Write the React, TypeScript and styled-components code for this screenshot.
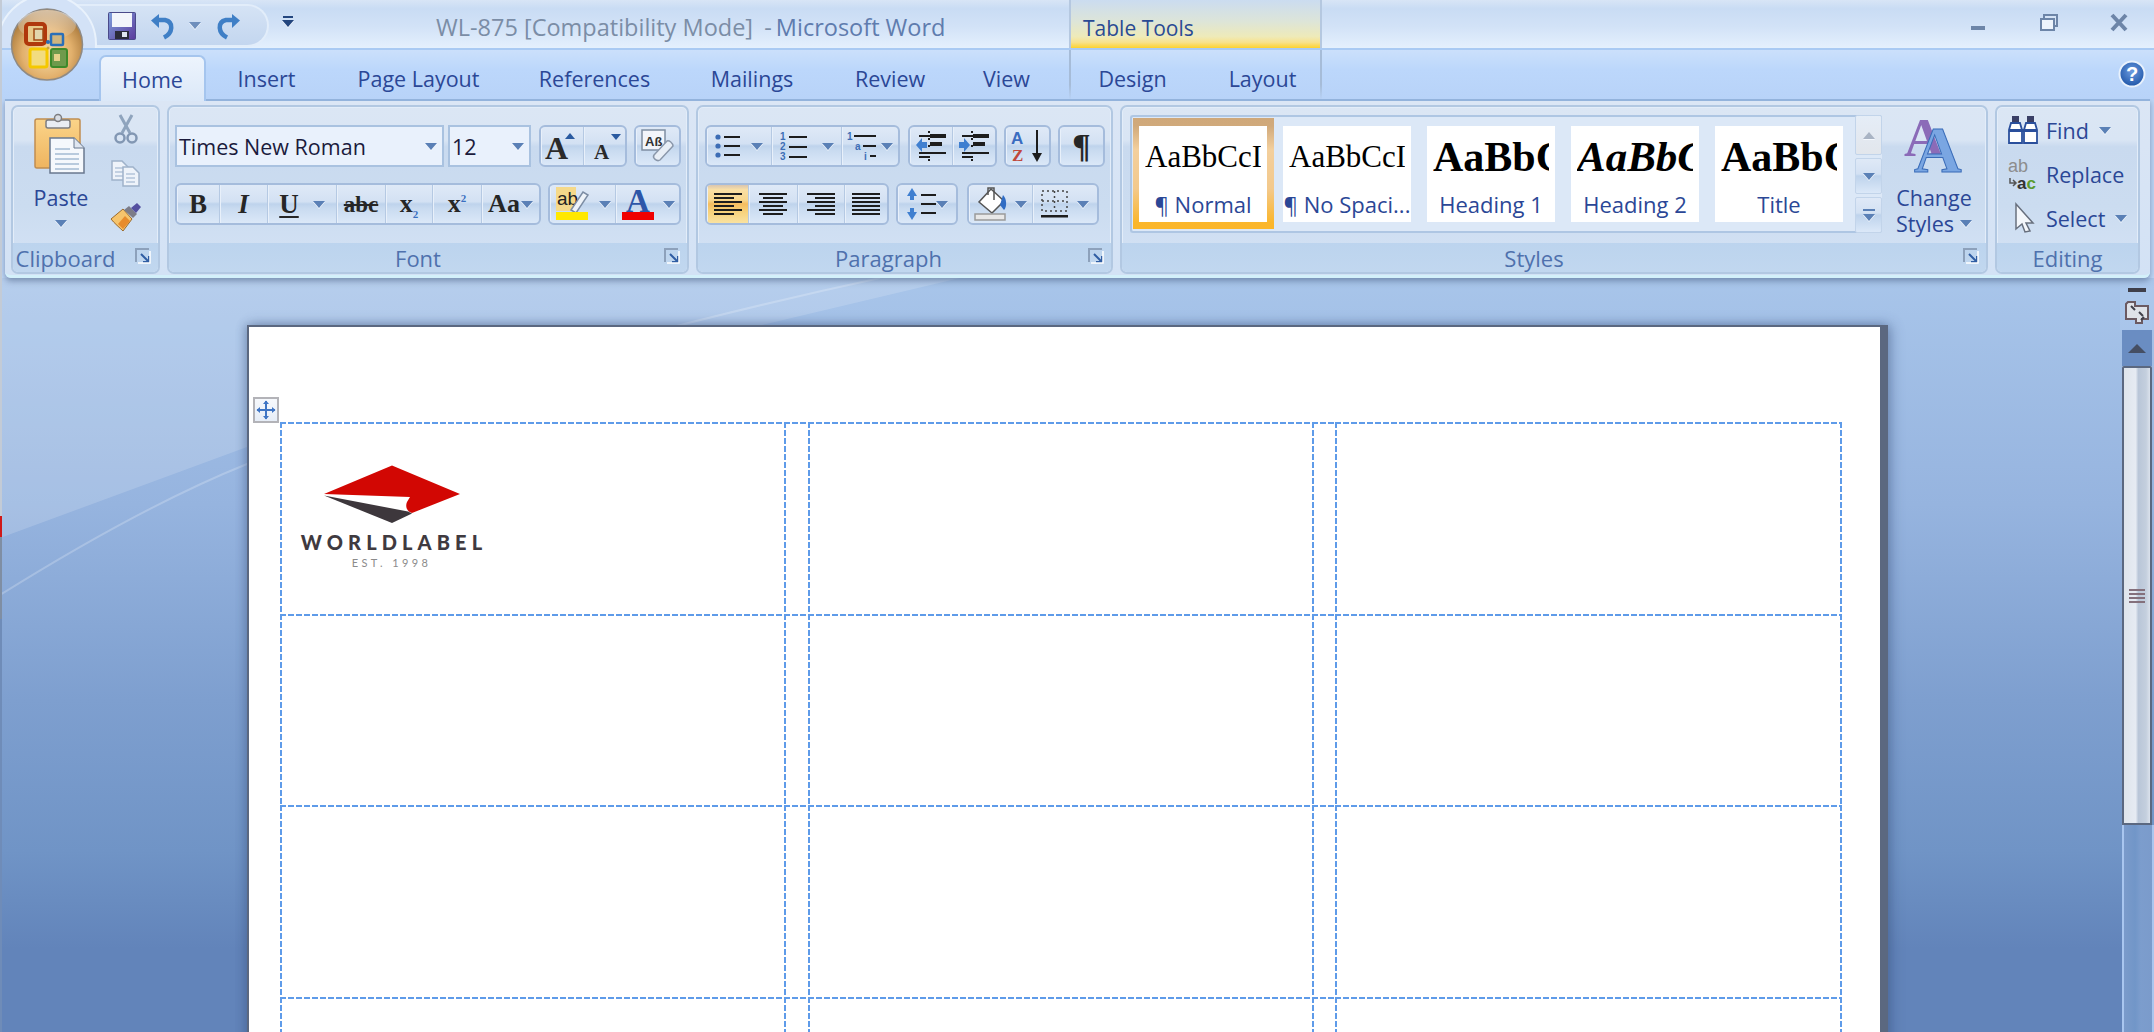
import React from 'react';
import styled, { createGlobalStyle } from 'styled-components';

const GlobalStyle = createGlobalStyle`
  * { box-sizing: border-box; }
  html, body { margin: 0; padding: 0; background: #bfd7f7; }
  body { font-family: "Open Sans", "Noto Sans", sans-serif; }
  svg { overflow: visible; display: block; }
`;

const Shell = styled.div`
  position: relative;
  width: 2154px;
  height: 1032px;
  overflow: hidden;
  display: flex;
  flex-direction: column;
  background: #bfd7f7;
  &::before {
    content: '';
    position: absolute;
    left: 0;
    top: 0;
    width: 2px;
    height: 100%;
    z-index: 9;
    background: linear-gradient(#c3cbd6 0 50%, #d01818 50% 52%, #7f8ea3 52% 60%, #6f8cb8 60% 100%);
  }
`;

const TitleBar = styled.header`
  position: relative;
  height: 50px;
  flex: none;
  display: flex;
  align-items: flex-start;
  padding-left: 60px;
  overflow: hidden;
  border-bottom: 2px solid #a9caf3;
  background: linear-gradient(#d8e5f6 0, #c9dcf4 18%, #d2e2f7 55%, #e4f0fd 100%);
`;
const Halo = styled.span`
  position: absolute;
  left: -3px;
  top: -6px;
  width: 100px;
  height: 100px;
  border-radius: 50%;
  z-index: 2;
  background: #d3e2f7;
  border: 2px solid #e9f2fc;
`;
const Qat = styled.div`
  width: 209px;
  height: 43px;
  margin-top: 4px;
  padding-left: 48px;
  display: flex;
  align-items: center;
  border-radius: 0 22px 22px 0;
  border: 2px solid #e2edfa;
  border-left: 0;
  background: linear-gradient(#d5e3f5, #c3d6ef);
`;
const QatSlot = styled.span<{ $w: number }>`
  width: ${(p) => p.$w}px;
  display: flex;
  justify-content: center;
  align-items: center;
`;
const Customize = styled.span`
  margin: 16px 0 0 14px;
  width: 10px;
  display: flex;
  flex-direction: column;
  align-items: center;
  gap: 2px;
  &::before {
    content: '';
    width: 10px;
    height: 2px;
    background: #23467f;
  }
`;
const DocTitle = styled.div`
  width: 633px;
  margin-left: 143px;
  padding-top: 11px;
  font-size: 23.5px;
  line-height: 32px;
  white-space: nowrap;
  color: #7b8da6;
`;
const AppName = styled.span`
  color: #5f7cae;
`;
const Dash = styled.span`
  margin: 0 -2px 0 5px;
`;
const ContextHead = styled.div`
  width: 253px;
  height: 48px;
  padding: 13px 0 0 12px;
  font-size: 21px;
  line-height: 30px;
  color: #2a4a94;
  border-left: 2px solid #b5c8e0;
  border-right: 2px solid #b5c8e0;
  background: linear-gradient(#cbdcf0 0, #dde5d8 45%, #eeeab9 76%, #f7e28f 88%, #fdd22e 100%);
`;
const WinButtons = styled.div`
  margin-left: auto;
  padding: 14px 26px 0 0;
  display: flex;
  align-items: flex-start;
`;
const WinSlot = styled.span<{ $w: number }>`
  width: ${(p) => p.$w}px;
  display: flex;
  justify-content: flex-end;
`;

const OfficeOrb = styled.div`
  position: absolute;
  left: 11px;
  top: 8px;
  width: 72px;
  height: 73px;
  z-index: 5;
`;

const TabStrip = styled.nav`
  height: 49px;
  flex: none;
  position: relative;
  z-index: 2;
  display: flex;
  align-items: flex-end;
  padding-left: 99px;
  background: linear-gradient(#cbe0fb, #bcd7fb 40%, #b8d3f8);
`;
const Tab = styled.div<{ $w: number; $active?: boolean }>`
  width: ${(p) => p.$w}px;
  flex: none;
  height: 46px;
  padding-top: ${(p) => (p.$active ? 0 : 5)}px;
  margin-bottom: ${(p) => (p.$active ? -2 : 0)}px;
  display: flex;
  align-items: center;
  justify-content: center;
  font-size: 21.5px;
  color: #2b4796;
  ${(p) =>
    p.$active &&
    `border: 2px solid #a5c5ee; border-bottom: 0; border-radius: 7px 7px 0 0;
     background: linear-gradient(#edf4fd, #dbe8f8);`}
`;
const ContextTabs = styled.div`
  margin-left: 11px;
  display: flex;
  height: 49px;
  align-items: flex-end;
  width: 253px;
  border-left: 2px solid;
  border-right: 2px solid;
  border-image: linear-gradient(#a6bcd8 0, #a6bcd8 70%, transparent 100%) 1;
`;
const HelpSlot = styled.div`
  margin: 10px 8px 0 auto;
  align-self: flex-start;
`;

const Ribbon = styled.section`
  height: 179px;
  flex: none;
  position: relative;
  z-index: 1;
  margin: 0 4px 0 5px;
  display: flex;
  gap: 7px;
  padding: 4px 0 1px 6px;
  border-top: 2px solid #93b3dc;
  border-bottom: 3px solid #d3f0fa;
  border-radius: 0 0 6px 6px;
  background: linear-gradient(#dbe6f5, #d3e2f5);
  box-shadow: 0 3px 6px rgba(70, 90, 125, 0.55);
`;
const Group = styled.div<{ $w: number }>`
  width: ${(p) => p.$w}px;
  display: flex;
  flex-direction: column;
  border: 2px solid #b2c8e2;
  border-radius: 7px;
  overflow: hidden;
  box-shadow: inset 0 0 0 1px #e3edf9;
  background: linear-gradient(#dbe6f4 0, #d9e5f4 20%, #c9daef 24%, #cbdcf0 60%, #d5e3f5 100%);
`;
const GroupBody = styled.div<{ $pt?: number; $pl?: number }>`
  flex: 1;
  display: flex;
  padding: ${(p) => p.$pt ?? 0}px 0 0 ${(p) => p.$pl ?? 0}px;
`;
const Rows = styled.div`
  display: flex;
  flex-direction: column;
  gap: 16px;
`;
const ToolRow = styled.div`
  display: flex;
  gap: 7px;
`;
const GroupLabel = styled.div<{ $align?: number }>`
  position: relative;
  height: 29px;
  flex: none;
  display: flex;
  align-items: center;
  justify-content: center;
  padding-right: ${(p) => p.$align ?? 0}px;
  font-size: 22px;
  line-height: 1;
  color: #4f71ad;
  background: linear-gradient(#bcd4ee, #c1d7ef);
`;
const LauncherSlot = styled.span`
  position: absolute;
  right: 7px;
  top: 5px;
  display: flex;
`;

const Caret = styled.i<{ $up?: boolean; $c?: string }>`
  display: inline-block;
  width: 0;
  height: 0;
  flex: none;
  border-left: 6px solid transparent;
  border-right: 6px solid transparent;
  ${(p) =>
    p.$up
      ? `border-bottom: 7px solid ${p.$c ?? '#a9b4c4'};`
      : `border-top: 7px solid ${p.$c ?? '#5a80b6'};`}
  filter: drop-shadow(0 1px 0 #f4f8fd);
`;

const Combo = styled.div<{ $w: number }>`
  width: ${(p) => p.$w}px;
  height: 42px;
  display: flex;
  align-items: center;
  justify-content: space-between;
  padding: 0 5px 0 2px;
  font-size: 21.5px;
  color: #1b1b3c;
  white-space: nowrap;
  border: 2px solid #a9c2e0;
  background: #e9f1fc;
`;
const ComboPair = styled.div`
  display: flex;
  gap: 4px;
  margin-right: 1px;
`;
const ToolGroup = styled.div<{ $ml?: number }>`
  height: 42px;
  display: flex;
  margin-left: ${(p) => p.$ml ?? 0}px;
  border: 2px solid #a5bcdc;
  border-radius: 6px;
  overflow: hidden;
  background: linear-gradient(#dfe9f7 0, #d3e1f3 44%, #bed3ec 50%, #c9dbf0 62%, #dbe8f8 100%);
`;
const Seg = styled.div<{ $w: number; $on?: boolean; $gap?: number }>`
  width: ${(p) => p.$w}px;
  height: 100%;
  display: flex;
  align-items: center;
  justify-content: center;
  gap: ${(p) => p.$gap ?? 6}px;
  border-right: 1px solid #b5c9e3;
  box-shadow: inset 1px 0 0 #e8f0fa;
  &:last-child { border-right: 0; }
  ${(p) =>
    p.$on &&
    `background: linear-gradient(#d9c5b0 0, #f9dfa6 12%, #f7d68c 40%, #f5bd60 50%, #f7d078 68%, #fae2a0 100%);`}
`;
const Face = styled.span<{ $size?: number; $under?: boolean; $strike?: boolean; $italic?: boolean }>`
  font-family: "Liberation Serif", serif;
  font-size: ${(p) => p.$size ?? 25}px;
  line-height: 1;
  color: #262626;
  font-weight: 700;
  font-style: ${(p) => (p.$italic ? 'italic' : 'normal')};
  text-decoration: ${(p) => (p.$under ? 'underline' : p.$strike ? 'line-through' : 'none')};
  text-underline-offset: 3px;
  sub, sup { font-size: 11px; color: #3a6fc0; line-height: 0; }
`;

const PasteCol = styled.div`
  width: 96px;
  padding-top: 7px;
  display: flex;
  flex-direction: column;
  align-items: center;
  font-size: 21.5px;
  line-height: 28px;
  color: #2b4796;
`;
const PasteText = styled.span`
  margin: 8px 0;
`;
const SmallCol = styled.div`
  width: 34px;
  display: flex;
  flex-direction: column;
`;
const SmallSlot = styled.div`
  height: 44px;
  display: flex;
  align-items: center;
  justify-content: center;
`;

const Gallery = styled.div`
  width: 752px;
  height: 118px;
  display: flex;
  padding-left: 7px;
  align-items: center;
  border: 2px solid #aec6e3;
  border-right: 0;
  border-radius: 3px;
  background: #dce8f7;
`;
const Cards = styled.div`
  flex: 1;
  display: flex;
  gap: 16px;
`;
const Card = styled.div<{ $on?: boolean }>`
  position: relative;
  width: 128px;
  height: 96px;
  display: flex;
  flex-direction: column;
  background: #fff;
  ${(p) =>
    p.$on &&
    `&::before {
      content: '';
      position: absolute;
      inset: -8px -7px -7px -6px;
      border-style: solid;
      border-width: 8px 7px 7px 6px;
      border-image: linear-gradient(#cfa87a 0, #f3cf9d 25%, #f3c98c 65%, #fbb62a 100%) 1;
    }`}
`;
const Preview = styled.div<{ $size: number; $weight?: number; $italic?: boolean }>`
  height: 61px;
  padding: 0 6px;
  display: flex;
  align-items: center;
  overflow: hidden;
  white-space: nowrap;
  font-family: "Liberation Serif", serif;
  font-size: ${(p) => p.$size}px;
  font-weight: ${(p) => p.$weight ?? 400};
  font-style: ${(p) => (p.$italic ? 'italic' : 'normal')};
  color: #000;
`;
const Sample = styled.span`
  display: block;
  width: 100%;
  overflow: hidden;
`;
const CardName = styled.div`
  height: 33px;
  display: flex;
  align-items: center;
  justify-content: center;
  font-size: 22px;
  line-height: 1;
  white-space: nowrap;
  color: #2b4796;
`;
const GalleryScroll = styled.div`
  width: 27px;
  height: 118px;
  margin-top: -2px;
  margin-bottom: -2px;
  display: flex;
  flex-direction: column;
  gap: 3px;
`;
const ScrollBtn = styled.div<{ $h: number; $off?: boolean }>`
  height: ${(p) => p.$h}px;
  display: flex;
  flex-direction: column;
  gap: 3px;
  align-items: center;
  justify-content: center;
  border: 1px solid #c2d4ea;
  border-radius: 2px;
  background: ${(p) =>
    p.$off
      ? 'linear-gradient(#e5edf7, #e2e6ec)'
      : 'linear-gradient(#dfe9f7 0, #d3e1f3 44%, #bed3ec 50%, #dbe8f8 100%)'};
`;
const Bar = styled.b`
  width: 12px;
  height: 2px;
  background: #5a80b6;
`;
const ChangeStyles = styled.div`
  width: 104px;
  display: flex;
  flex-direction: column;
  align-items: center;
  padding-top: 2px;
  font-size: 21.5px;
  line-height: 27px;
  color: #2b4796;
  text-align: center;
`;
const ChangeWord = styled.span`
  margin-top: 11px;
`;
const ChangeLine = styled.span`
  display: flex;
  align-items: center;
  gap: 6px;
  margin-top: -1px;
`;

const EditCol = styled.div`
  padding: 1px 0 0 11px;
  display: flex;
  flex-direction: column;
`;
const EditRow = styled.div`
  height: 44px;
  display: grid;
  grid-template-columns: 38px auto auto;
  justify-content: start;
  align-items: center;
  font-size: 21.5px;
  color: #2b4796;
`;
const EditIcon = styled.span<{ $pl?: number }>`
  padding-left: ${(p) => p.$pl ?? 0}px;
`;
const EditName = styled.span`
  margin-right: 10px;
`;

const Workspace = styled.main`
  flex: 1;
  position: relative;
  min-height: 0;
  display: flex;
  background: linear-gradient(#a8c5ea 0, #96b4df 30%, #7e9fcf 56%, #7094c6 76%, #6284ba 89%, #6284ba 100%);
`;
const Swoosh = styled.svg`
  position: absolute;
  left: 0;
  top: 0;
`;
const PageArea = styled.div`
  flex: 1;
  position: relative;
  min-width: 0;
  padding: 47px 0 0 247px;
  overflow: hidden;
`;
const Page = styled.article`
  width: 1641px;
  height: 900px;
  padding: 95px 0 0 31px;
  background: #fff;
  border-top: 2px solid #5b6880;
  border-left: 2px solid #5b6880;
  border-right: 8px solid #5b6880;
  box-shadow: 3px 0 12px rgba(50, 75, 120, 0.45), -3px 0 8px rgba(50, 75, 120, 0.25);
`;
const TableGrid = styled.div`
  position: relative;
  display: grid;
  width: 1563px;
  grid-template-columns: 504px 24px 504px 23px 507px;
  grid-auto-rows: 191.5px;
`;
const dash = '#5e9be9';
const Cell = styled.div<{ $end?: boolean }>`
  padding: 43px 0 0 21px;
  background-image:
    repeating-linear-gradient(90deg, ${dash} 0 6px, transparent 6px 8px),
    repeating-linear-gradient(180deg, ${dash} 0 6px, transparent 6px 8px)
    ${(p) => (p.$end ? `, repeating-linear-gradient(180deg, ${dash} 0 6px, transparent 6px 8px)` : '')};
  background-size: 100% 2px, 2px 100%${(p) => (p.$end ? ', 2px 100%' : '')};
  background-position: left top, left top${(p) => (p.$end ? ', right top' : '')};
  background-repeat: no-repeat;
`;
const MoveHandle = styled.div`
  position: absolute;
  left: -27px;
  top: -25px;
  width: 26px;
  height: 26px;
  display: flex;
  align-items: center;
  justify-content: center;
  border: 2px solid #b3b3b8;
  background: linear-gradient(#f6f8fc, #e6edf7);
`;
const Logo = styled.div`
  width: 181px;
  display: flex;
  flex-direction: column;
  align-items: center;
`;
const LogoName = styled.div`
  margin-top: 8px;
  font-family: Lato, sans-serif;
  font-weight: 900;
  font-size: 20px;
  line-height: 22px;
  letter-spacing: 5.1px;
  margin-right: -5px;
  white-space: nowrap;
  color: #3f3a40;
`;
const LogoEst = styled.div`
  margin-top: 4px;
  font-family: Lato, sans-serif;
  font-size: 11px;
  line-height: 12px;
  letter-spacing: 3.4px;
  white-space: nowrap;
  color: #8b8b8b;
`;

const VScroll = styled.aside`
  width: 34px;
  flex: none;
  position: relative;
  display: flex;
  flex-direction: column;
  align-items: stretch;
`;
const SplitBox = styled.div`
  height: 52px;
  padding-top: 10px;
  display: flex;
  flex-direction: column;
  align-items: center;
  gap: 8px;
  background: rgba(180, 205, 240, 0.35);
`;
const SplitBar = styled.span`
  width: 18px;
  height: 4px;
  background: #3f3f4a;
`;
const UpButton = styled.div`
  height: 36px;
  margin: 0 2px;
  display: flex;
  align-items: center;
  justify-content: center;
  background: #6a8dc2;
`;
const UpTriangle = styled.span`
  width: 18px;
  height: 0;
  border-left: 9px solid transparent;
  border-right: 9px solid transparent;
  border-bottom: 9px solid #454e63;
`;
const Thumb = styled.div`
  width: 30px;
  height: 459px;
  margin-left: 2px;
  display: flex;
  align-items: center;
  justify-content: center;
  border: 2px solid #5b6880;
  border-radius: 2px 2px 0 0;
  background: linear-gradient(90deg, #dfe5ec 0, #e6ebf3 45%, #b9c6d8 55%, #c4cfde 85%, #dbe2ec 100%);
`;
const Grip = styled.span`
  width: 16px;
  height: 14px;
  background: repeating-linear-gradient(#84707c 0 2px, transparent 2px 4px);
`;
const Track = styled.div`
  flex: 1;
  margin: 0 0 0 2px;
  border-left: 2px solid #a9c6ef;
  border-right: 2px solid #a9c6ef;
  background: linear-gradient(90deg, #7b9bcb 0, #7196c8 40%, #7c9dcd 60%, #7b9bcb 100%);
`;

const Ink = '#1d1d1d';

const OrbIcon = () => (
  <svg width="72" height="73" viewBox="11 8 72 73">
    <defs>
      <radialGradient id="orb" cx="50%" cy="62%" r="58%">
        <stop offset="0" stopColor="#f7dfa8" />
        <stop offset="0.6" stopColor="#e2b06c" />
        <stop offset="1" stopColor="#a9793c" />
      </radialGradient>
      <linearGradient id="orbTop" x1="0" y1="0" x2="0" y2="1">
        <stop offset="0" stopColor="#fff" stopOpacity="0.55" />
        <stop offset="1" stopColor="#fff" stopOpacity="0.05" />
      </linearGradient>
    </defs>
    <circle cx="47" cy="44.5" r="35.5" fill="url(#orb)" stroke="#8f8a84" strokeWidth="1.5" />
    <ellipse cx="47" cy="25" rx="29" ry="15" fill="url(#orbTop)" />
    <rect x="26" y="24" width="19" height="20" rx="3" fill="#e8c888" stroke="#b0380c" strokeWidth="4" />
    <rect x="34" y="29" width="9" height="11" fill="#e2d6ae" stroke="#a04a14" strokeWidth="1.5" />
    <rect x="51" y="34" width="12" height="11" rx="1" fill="#cfb57e" stroke="#2a6fb8" strokeWidth="2.5" />
    <rect x="30" y="49" width="17" height="18" rx="2" fill="#f2dc80" stroke="#f5c800" strokeWidth="3" />
    <rect x="51" y="49" width="16" height="18" rx="2" fill="#6f9a4c" stroke="#3d8a2a" strokeWidth="2" />
    <rect x="54" y="54" width="6" height="7" fill="#e5d18a" />
    <circle cx="48" cy="42" r="2" fill="#2a6fb8" />
    <circle cx="48" cy="48" r="1.5" fill="#c9a83c" />
  </svg>
);

const SaveIcon = () => (
  <svg width="28" height="28" viewBox="0 0 28 28">
    <defs>
      <linearGradient id="flop" x1="0" y1="0" x2="1" y2="1">
        <stop offset="0" stopColor="#7fa2dd" />
        <stop offset="1" stopColor="#5b3a9c" />
      </linearGradient>
    </defs>
    <rect x="0.5" y="0.5" width="27" height="27" rx="1" fill="url(#flop)" stroke="#4a4a8a" />
    <rect x="4" y="1" width="20" height="14" fill="#f2f5fb" />
    <rect x="7" y="19" width="14" height="8" fill="#2a2a3a" />
    <rect x="14" y="20" width="5" height="5" fill="#dfe5f0" />
  </svg>
);

const UndoIcon = ({ flip }: { flip?: boolean }) => (
  <svg width="25" height="26" viewBox="0 0 25 26">
    <g transform={flip ? 'translate(25 0) scale(-1 1)' : undefined}>
      <path d="M14 24.5 C23 20 24 9 15 7 L8 7" fill="none" stroke="#3f7fc6" strokeWidth="4.5" />
      <path d="M1 7.5 L9 1 L9 15 Z" fill="#3f7fc6" />
    </g>
  </svg>
);

const HelpIcon = () => (
  <svg width="28" height="28" viewBox="0 0 28 28">
    <defs>
      <radialGradient id="help" cx="50%" cy="40%" r="60%">
        <stop offset="0" stopColor="#6b9be0" />
        <stop offset="1" stopColor="#1f56a8" />
      </radialGradient>
    </defs>
    <circle cx="14" cy="14" r="12.5" fill="url(#help)" stroke="#e8f1fc" strokeWidth="2" />
    <text x="14" y="21" textAnchor="middle" fontFamily="Liberation Sans" fontWeight="700" fontSize="20" fill="#fff">?</text>
  </svg>
);

const MinIcon = () => (
  <svg width="15" height="16" viewBox="0 0 15 16"><rect y="12" width="14" height="4" fill="#6d85a8" /></svg>
);
const RestoreIcon = () => (
  <svg width="18" height="17" viewBox="0 0 18 17">
    <rect x="4" y="1" width="13" height="11" fill="#d5e3f6" stroke="#6d85a8" strokeWidth="2" />
    <rect x="1" y="5" width="13" height="11" fill="#eef4fc" stroke="#6d85a8" strokeWidth="2" />
  </svg>
);
const CloseIcon = () => (
  <svg width="18" height="17" viewBox="0 0 18 17">
    <path d="M2 1 L16 16 M16 1 L2 16" stroke="#6d85a8" strokeWidth="4" />
  </svg>
);

const PasteIcon = () => (
  <svg width="56" height="62" viewBox="0 0 56 62">
    <defs>
      <linearGradient id="board" x1="0" y1="0" x2="0" y2="1">
        <stop offset="0" stopColor="#fbd489" />
        <stop offset="1" stopColor="#efb45f" />
      </linearGradient>
    </defs>
    <rect x="2" y="5" width="45" height="49" rx="2" fill="url(#board)" stroke="#c08d50" strokeWidth="1.5" />
    <rect x="13" y="6" width="24" height="8" rx="2" fill="#e9edf3" stroke="#7d7d80" strokeWidth="1.5" />
    <circle cx="25" cy="4" r="3.5" fill="#d9dde4" stroke="#7d7d80" strokeWidth="1.5" />
    <path d="M17 24 H41 L51 34 V59 H17 Z" fill="#f5f8fc" stroke="#69788f" strokeWidth="1.5" />
    <path d="M41 24 V34 H51" fill="#dfe6f0" stroke="#69788f" strokeWidth="1" />
    {[34, 39, 44, 49, 54].map((y) => (
      <rect key={y} x="22" y={y} width={y < 38 ? 15 : 24} height="2" fill="#b8cadd" />
    ))}
  </svg>
);
const ScissorsIcon = () => (
  <svg width="24" height="30" viewBox="0 0 24 30">
    <path d="M6 1 L16 19 M18 1 L8 19" stroke="#8fa4bd" strokeWidth="3" />
    <circle cx="6" cy="24" r="4.5" fill="none" stroke="#8297b3" strokeWidth="2.5" />
    <circle cx="18" cy="24" r="4.5" fill="none" stroke="#8297b3" strokeWidth="2.5" />
  </svg>
);
const CopyIcon = () => (
  <svg width="30" height="27" viewBox="0 0 30 27">
    {[0, 11].map((dx, i) => (
      <g key={dx} transform={`translate(${dx} ${i * 6})`}>
        <path d="M1 1 H11 L17 7 V20 H1 Z" fill="#eef3fa" stroke="#9fb2ca" strokeWidth="1.5" />
        <path d="M4 8 H13 M4 12 H13 M4 16 H13" stroke="#b4c5da" strokeWidth="1.5" />
      </g>
    ))}
  </svg>
);
const PainterIcon = () => (
  <svg width="32" height="30" viewBox="0 0 32 30">
    <path d="M1 17 L13 7 L22 17 L13 29 C10 26 4 21 1 17 Z" fill="#f6c46c" stroke="#9b6a2c" />
    <path d="M8 22 L15 14 L20 19 L13 27 Z" fill="#e88c2c" />
    <path d="M14 8 L23 16 L27 12 L19 4 Z" fill="#7c7c88" />
    <path d="M21 6 L27 1 L31 5 L26 11 Z" fill="#5450a0" />
  </svg>
);
const LauncherIcon = () => (
  <svg width="16" height="16" viewBox="0 0 16 16">
    <path d="M1 14 V1 H14" fill="none" stroke="#8da1bb" strokeWidth="2" />
    <path d="M6 6 L14 14 M14 8 V14 H8" fill="none" stroke="#2f5da3" strokeWidth="2" />
    <path d="M3 15 H15 V3" fill="none" stroke="#fff" strokeWidth="1.5" />
  </svg>
);

const SizeIcon = ({ size, up }: { size: number; up?: boolean }) => (
  <svg width="38" height="30" viewBox="0 0 38 30">
    <text x={up ? 2 : 8} y="28" fontFamily="Liberation Serif" fontWeight="700" fontSize={size} fill="#2a2a2a">A</text>
    {up ? <path d="M22 8 L27 2 L32 8 Z" fill="#2a5aa0" /> : <path d="M25 3 L35 3 L30 9 Z" fill="#2a5aa0" />}
  </svg>
);
const ClearIcon = () => (
  <svg width="34" height="34" viewBox="0 0 34 34">
    <rect x="1" y="1" width="23" height="20" fill="#f2f5fb" stroke="#7f8ea3" strokeWidth="1.5" />
    <text x="4" y="17" fontFamily="Liberation Sans" fontWeight="700" fontSize="13" fill="#333">Aß</text>
    <path d="M13 26 L26 12 C28 11 32 14 32 17 L19 31 C16 33 11 29 13 26 Z" fill="#e8eef6" stroke="#8a97aa" strokeWidth="1.5" />
  </svg>
);
const HighlightIcon = () => (
  <svg width="34" height="34" viewBox="0 0 34 34">
    <rect x="1" y="0" width="20" height="24" fill="#f5d98a" />
    <text x="2" y="18" fontFamily="Liberation Sans" fontSize="19" fill="#222">ab</text>
    <path d="M16 23 L28 5 L33 8 L21 26 Z" fill="#eef3f9" stroke="#7c8da4" strokeWidth="1.5" />
    <rect x="1" y="25" width="32" height="8" fill="#ffe800" />
  </svg>
);
const FontColorIcon = () => (
  <svg width="34" height="34" viewBox="0 0 34 34">
    <text x="17" y="25" textAnchor="middle" fontFamily="Liberation Serif" fontWeight="700" fontSize="33" fill="#2d56a8">A</text>
    <rect x="1" y="25" width="32" height="8" fill="#f00000" />
  </svg>
);
const BulletsIcon = () => (
  <svg width="26" height="26" viewBox="0 0 26 26">
    {[4, 13, 22].map((y) => (
      <g key={y}>
        <circle cx="3" cy={y} r="2.6" fill="#3d6db5" />
        <rect x="9" y={y - 1} width="16" height="2" fill={Ink} />
      </g>
    ))}
  </svg>
);
const NumberedIcon = () => (
  <svg width="28" height="28" viewBox="0 0 28 28">
    {['1', '2', '3'].map((n, i) => (
      <g key={n}>
        <text x="0" y={8 + i * 10} fontFamily="Liberation Sans" fontWeight="700" fontSize="10" fill="#3d6db5">{n}</text>
        <rect x="9" y={4 + i * 10} width="18" height="2" fill={Ink} />
      </g>
    ))}
  </svg>
);
const MultilevelIcon = () => (
  <svg width="34" height="30" viewBox="0 0 34 30">
    <text x="0" y="9" fontFamily="Liberation Sans" fontWeight="700" fontSize="10" fill="#3d6db5">1</text>
    <rect x="7" y="4" width="22" height="2" fill={Ink} />
    <text x="8" y="19" fontFamily="Liberation Sans" fontWeight="700" fontSize="10" fill="#3d6db5">a</text>
    <rect x="16" y="14" width="13" height="2" fill={Ink} />
    <text x="17" y="29" fontFamily="Liberation Sans" fontWeight="700" fontSize="10" fill="#3d6db5">i</text>
    <rect x="23" y="24" width="6" height="2" fill={Ink} />
  </svg>
);
const IndentIcon = ({ more }: { more?: boolean }) => (
  <svg width="34" height="30" viewBox="0 0 34 30">
    <path d={more ? 'M2 11 H7 V7 L13 14 L7 21 V17 H2 Z' : 'M13 11 H8 V7 L2 14 L8 21 V17 H13 Z'} fill="#3f7fd0" />
    <rect x="5" y="4" width="11" height="2" fill={Ink} />
    <rect x="16" y="3" width="16" height="4" fill={Ink} />
    <rect x="16" y="11" width="12" height="4" fill={Ink} />
    <rect x="5" y="21" width="27" height="2" fill={Ink} />
    <rect x="5" y="25" width="11" height="2" fill={Ink} />
    <path d="M15 0 V30" stroke={Ink} strokeWidth="2" strokeDasharray="2 5" />
  </svg>
);
const SortIcon = () => (
  <svg width="36" height="34" viewBox="0 0 36 34">
    <text x="1" y="15" fontFamily="Liberation Sans" fontWeight="700" fontSize="17" fill="#3a6cc0">A</text>
    <text x="2" y="32" fontFamily="Liberation Serif" fontWeight="700" fontSize="17" fill="#c0483c">Z</text>
    <path d="M27 1 V27" stroke={Ink} strokeWidth="2" />
    <path d="M22 24 H32 L27 33 Z" fill={Ink} />
  </svg>
);
const AlignIcon = ({ mode }: { mode: 'left' | 'center' | 'right' | 'full' }) => (
  <svg width="28" height="24" viewBox="0 0 28 24">
    {[28, 20, 28, 20, 28, 20].map((len, i) => {
      const l = mode === 'full' ? 28 : len;
      const x = mode === 'left' || mode === 'full' ? 0 : mode === 'center' ? (28 - l) / 2 : 28 - l;
      return <rect key={i} x={x} y={i * 4 + 1} width={l} height={2} fill={Ink} />;
    })}
  </svg>
);
const SpacingIcon = () => (
  <svg width="30" height="32" viewBox="0 0 30 32">
    <path d="M6 0 L11 8 H8 V12 H4 V8 H1 Z M6 32 L11 24 H8 V20 H4 V24 H1 Z" fill="#3f7fd0" />
    <rect x="15" y="6" width="15" height="2" fill={Ink} />
    <rect x="15" y="15" width="15" height="2" fill={Ink} />
    <rect x="15" y="24" width="15" height="2" fill={Ink} />
  </svg>
);
const ShadingIcon = () => (
  <svg width="34" height="34" viewBox="0 0 34 34">
    <path d="M17 2 L30 14 L18 26 L5 15 Z" fill="#fff" stroke="#555" strokeWidth="1.5" />
    <path d="M14 8 V1 H20 V13" fill="none" stroke="#555" strokeWidth="1.5" />
    <path d="M29 8 C33 12 33 20 30 23 L26 18 Z" fill="#2f6cc4" />
    <rect x="1" y="27" width="30" height="6" fill="#e8e8e8" stroke="#9a9a9a" strokeWidth="1.5" />
  </svg>
);
const BordersIcon = () => (
  <svg width="28" height="28" viewBox="0 0 28 28">
    <rect x="1" y="1" width="25" height="20" fill="none" stroke="#444" strokeDasharray="2 3" strokeWidth="1.5" />
    <path d="M13.5 1 V21 M1 11 H26" stroke="#444" strokeDasharray="2 3" strokeWidth="1.5" />
    <rect x="0" y="25" width="27" height="2.5" fill={Ink} />
  </svg>
);
const ChangeStylesIcon = () => (
  <svg width="60" height="56" viewBox="0 0 60 56">
    <text x="0" y="39" fontFamily="Liberation Serif" fontWeight="700" fontSize="55" fill="#8b6bb8">A</text>
    <text x="10" y="55" fontFamily="Liberation Serif" fontWeight="700" fontSize="66" fill="#7aa6e2" stroke="#3a6cb8" strokeWidth="1">A</text>
  </svg>
);
const FindIcon = () => (
  <svg width="30" height="28" viewBox="0 0 30 28">
    {[1, 16].map((x) => (
      <g key={x}>
        <rect x={x + 3} y="0" width="7" height="7" fill="#3a3f66" />
        <path d={`M${x + 2} 7 H${x + 11} L${x + 13} 14 V27 H${x} V14 Z`} fill="#fff" stroke="#2a4f9c" strokeWidth="1.8" />
      </g>
    ))}
    <rect x="1" y="13" width="28" height="3" fill="#2a4f9c" />
  </svg>
);
const ReplaceIcon = () => (
  <svg width="32" height="32" viewBox="0 0 32 32">
    <text x="0" y="14" fontFamily="Liberation Sans" fontSize="18" fill="#8d8d8d">ab</text>
    <path d="M2 20 V25 H8 M5 22 L8 25 L5 28" fill="none" stroke="#555" strokeWidth="1.5" />
    <text x="9" y="31" fontFamily="Liberation Sans" fontWeight="700" fontSize="17" fill="#333">a<tspan fill="#5a9a30">c</tspan></text>
  </svg>
);
const CursorIcon = () => (
  <svg width="20" height="30" viewBox="0 0 20 30">
    <path d="M1 1 L18 20 L11 20 L15 28 L10 29 L7 21 L1 26 Z" fill="#f4f7fb" stroke="#68707e" strokeWidth="1.5" />
  </svg>
);
const MoveIcon = () => (
  <svg width="20" height="20" viewBox="0 0 20 20">
    <path d="M10 1 V19 M1 10 H19" stroke="#3f75c4" strokeWidth="2" />
    <path d="M7 4 L10 0.5 L13 4 Z M7 16 L10 19.5 L13 16 Z M4 7 L0.5 10 L4 13 Z M16 7 L19.5 10 L16 13 Z" fill="#3f75c4" />
  </svg>
);
const RulerIcon = () => (
  <svg width="24" height="24" viewBox="0 0 24 24">
    <path d="M3 2 H10 V6 H23 V19 H17 V23 H11 V19 H1 V4 Z" fill="#dfe2e8" stroke="#6b5a62" strokeWidth="2" />
    <path d="M6 6 L10 10 M14 12 L18 16 M16 20 L19 17" stroke="#3f3f4a" strokeWidth="2" />
  </svg>
);

const StyleCards = [
  { name: '¶ Normal', sample: 'AaBbCcI', size: 31, on: true },
  { name: '¶ No Spaci...', sample: 'AaBbCcI', size: 31 },
  { name: 'Heading 1', sample: 'AaBbCc', size: 42, weight: 700 },
  { name: 'Heading 2', sample: 'AaBbCc', size: 43, weight: 700, italic: true },
  { name: 'Title', sample: 'AaBbCc', size: 42, weight: 700 },
];

const TableCells = Array.from({ length: 20 }, (_, i) => i);

function App(): JSX.Element {
  return (
    <Shell>
      <GlobalStyle />
      <OfficeOrb><OrbIcon /></OfficeOrb>
      <TitleBar>
        <Halo />
        <Qat>
          <QatSlot $w={28}><SaveIcon /></QatSlot>
          <QatSlot $w={53}><UndoIcon /></QatSlot>
          <Caret $c="#6f8fbc" />
          <QatSlot $w={54}><UndoIcon flip /></QatSlot>
        </Qat>
        <Customize><Caret $c="#23467f" /></Customize>
        <DocTitle>WL-875 [Compatibility Mode]<Dash> -</Dash> <AppName>Microsoft Word</AppName></DocTitle>
        <ContextHead>Table Tools</ContextHead>
        <WinButtons>
          <WinSlot $w={15}><MinIcon /></WinSlot>
          <WinSlot $w={72}><RestoreIcon /></WinSlot>
          <WinSlot $w={70}><CloseIcon /></WinSlot>
        </WinButtons>
      </TitleBar>

      <TabStrip>
        <Tab $w={107} $active>Home</Tab>
        <Tab $w={121}>Insert</Tab>
        <Tab $w={183}>Page Layout</Tab>
        <Tab $w={169}>References</Tab>
        <Tab $w={146}>Mailings</Tab>
        <Tab $w={130}>Review</Tab>
        <Tab $w={103}>View</Tab>
        <ContextTabs>
          <Tab $w={123}>Design</Tab>
          <Tab $w={137}>Layout</Tab>
        </ContextTabs>
        <HelpSlot><HelpIcon /></HelpSlot>
      </TabStrip>

      <Ribbon>
        <Group $w={149}>
          <GroupBody>
            <PasteCol>
              <PasteIcon />
              <PasteText>Paste</PasteText>
              <Caret />
            </PasteCol>
            <SmallCol>
              <SmallSlot><ScissorsIcon /></SmallSlot>
              <SmallSlot><CopyIcon /></SmallSlot>
              <SmallSlot><PainterIcon /></SmallSlot>
            </SmallCol>
          </GroupBody>
          <GroupLabel $align={40}>Clipboard<LauncherSlot><LauncherIcon /></LauncherSlot></GroupLabel>
        </Group>

        <Group $w={522}>
          <GroupBody $pt={18} $pl={6}>
            <Rows>
              <ToolRow>
                <ComboPair>
                  <Combo $w={269}>Times New Roman<Caret /></Combo>
                  <Combo $w={83}>12<Caret /></Combo>
                </ComboPair>
                <ToolGroup>
                  <Seg $w={43}><SizeIcon size={32} up /></Seg>
                  <Seg $w={41}><SizeIcon size={21} /></Seg>
                </ToolGroup>
                <ToolGroup>
                  <Seg $w={43}><ClearIcon /></Seg>
                </ToolGroup>
              </ToolRow>
              <ToolRow>
                <ToolGroup>
                  <Seg $w={43}><Face $size={27}>B</Face></Seg>
                  <Seg $w={48}><Face $size={27} $italic>I</Face></Seg>
                  <Seg $w={69} $gap={14}><Face $size={27} $under>U</Face><Caret /></Seg>
                  <Seg $w={49}><Face $size={23} $strike>abc</Face></Seg>
                  <Seg $w={47}><Face $size={26}>x<sub>2</sub></Face></Seg>
                  <Seg $w={49}><Face $size={26}>x<sup>2</sup></Face></Seg>
                  <Seg $w={57} $gap={1}><Face $size={26}>Aa</Face><Caret /></Seg>
                </ToolGroup>
                <ToolGroup>
                  <Seg $w={66} $gap={10}><HighlightIcon /><Caret /></Seg>
                  <Seg $w={63} $gap={8}><FontColorIcon /><Caret /></Seg>
                </ToolGroup>
              </ToolRow>
            </Rows>
          </GroupBody>
          <GroupLabel $align={20}>Font<LauncherSlot><LauncherIcon /></LauncherSlot></GroupLabel>
        </Group>

        <Group $w={417}>
          <GroupBody $pt={18} $pl={7}>
            <Rows>
              <ToolRow>
                <ToolGroup>
                  <Seg $w={65} $gap={10}><BulletsIcon /><Caret /></Seg>
                  <Seg $w={70} $gap={14}><NumberedIcon /><Caret /></Seg>
                  <Seg $w={56} $gap={0}><MultilevelIcon /><Caret /></Seg>
                </ToolGroup>
                <ToolGroup $ml={1}>
                  <Seg $w={43}><IndentIcon /></Seg>
                  <Seg $w={42}><IndentIcon more /></Seg>
                </ToolGroup>
                <ToolGroup>
                  <Seg $w={43}><SortIcon /></Seg>
                </ToolGroup>
                <ToolGroup>
                  <Seg $w={43}><Face $size={34}>¶</Face></Seg>
                </ToolGroup>
              </ToolRow>
              <ToolRow>
                <ToolGroup>
                  <Seg $w={42} $on><AlignIcon mode="left" /></Seg>
                  <Seg $w={49}><AlignIcon mode="center" /></Seg>
                  <Seg $w={47}><AlignIcon mode="right" /></Seg>
                  <Seg $w={42}><AlignIcon mode="full" /></Seg>
                </ToolGroup>
                <ToolGroup>
                  <Seg $w={58} $gap={0}><SpacingIcon /><Caret /></Seg>
                </ToolGroup>
                <ToolGroup $ml={2}>
                  <Seg $w={64} $gap={7}><ShadingIcon /><Caret /></Seg>
                  <Seg $w={64} $gap={8}><BordersIcon /><Caret /></Seg>
                </ToolGroup>
              </ToolRow>
            </Rows>
          </GroupBody>
          <GroupLabel $align={32}>Paragraph<LauncherSlot><LauncherIcon /></LauncherSlot></GroupLabel>
        </Group>

        <Group $w={868}>
          <GroupBody $pt={8} $pl={8}>
            <Gallery>
              <Cards>
                {StyleCards.map((card) => (
                  <Card key={card.name} $on={card.on}>
                    <Preview $size={card.size} $weight={card.weight} $italic={card.italic}>
                      <Sample>{card.sample}</Sample>
                    </Preview>
                    <CardName>{card.name}</CardName>
                  </Card>
                ))}
              </Cards>
              <GalleryScroll>
                <ScrollBtn $h={40} $off><Caret $up /></ScrollBtn>
                <ScrollBtn $h={36}><Caret /></ScrollBtn>
                <ScrollBtn $h={36}><Bar /><Caret /></ScrollBtn>
              </GalleryScroll>
            </Gallery>
            <ChangeStyles>
              <ChangeStylesIcon />
              <ChangeWord>Change</ChangeWord>
              <ChangeLine>Styles<Caret /></ChangeLine>
            </ChangeStyles>
          </GroupBody>
          <GroupLabel $align={40}>Styles<LauncherSlot><LauncherIcon /></LauncherSlot></GroupLabel>
        </Group>

        <Group $w={145}>
          <GroupBody>
            <EditCol>
              <EditRow><EditIcon><FindIcon /></EditIcon><EditName>Find</EditName><Caret /></EditRow>
              <EditRow><EditIcon><ReplaceIcon /></EditIcon><EditName>Replace</EditName></EditRow>
              <EditRow><EditIcon $pl={7}><CursorIcon /></EditIcon><EditName>Select</EditName><Caret /></EditRow>
            </EditCol>
          </GroupBody>
          <GroupLabel>Editing</GroupLabel>
        </Group>
      </Ribbon>

      <Workspace>
        <Swoosh width="1100" height="320" viewBox="0 278 1100 320">
          <path d="M0 538 L247 447 L960 278 L0 278 Z" fill="#fff" fillOpacity="0.16" />
          <path d="M0 595 C80 545 170 495 247 464 C430 390 640 330 880 278" fill="none" stroke="#fff" strokeOpacity="0.22" strokeWidth="2" />
        </Swoosh>
        <PageArea>
          <Page>
            <TableGrid>
              <MoveHandle><MoveIcon /></MoveHandle>
              {TableCells.map((i) => (
                <Cell key={i} $end={i % 5 === 4}>
                  {i === 0 && (
                    <Logo>
                      <svg width="136" height="58" viewBox="324 465 136 58">
                        <path d="M324 494 L392 465.5 L460 494 L412 513 C407 512 405 506 407 502 L410 497 Z" fill="#d20703" />
                        <path d="M324 495.5 L408 511.5 L412 513.5 L392 523 Z" fill="#3d373c" />
                      </svg>
                      <LogoName>WORLDLABEL</LogoName>
                      <LogoEst>EST. 1998</LogoEst>
                    </Logo>
                  )}
                </Cell>
              ))}
            </TableGrid>
          </Page>
        </PageArea>
        <VScroll>
          <SplitBox>
            <SplitBar />
            <RulerIcon />
          </SplitBox>
          <UpButton><UpTriangle /></UpButton>
          <Thumb><Grip /></Thumb>
          <Track />
        </VScroll>
      </Workspace>
    </Shell>
  );
}

export default App;
